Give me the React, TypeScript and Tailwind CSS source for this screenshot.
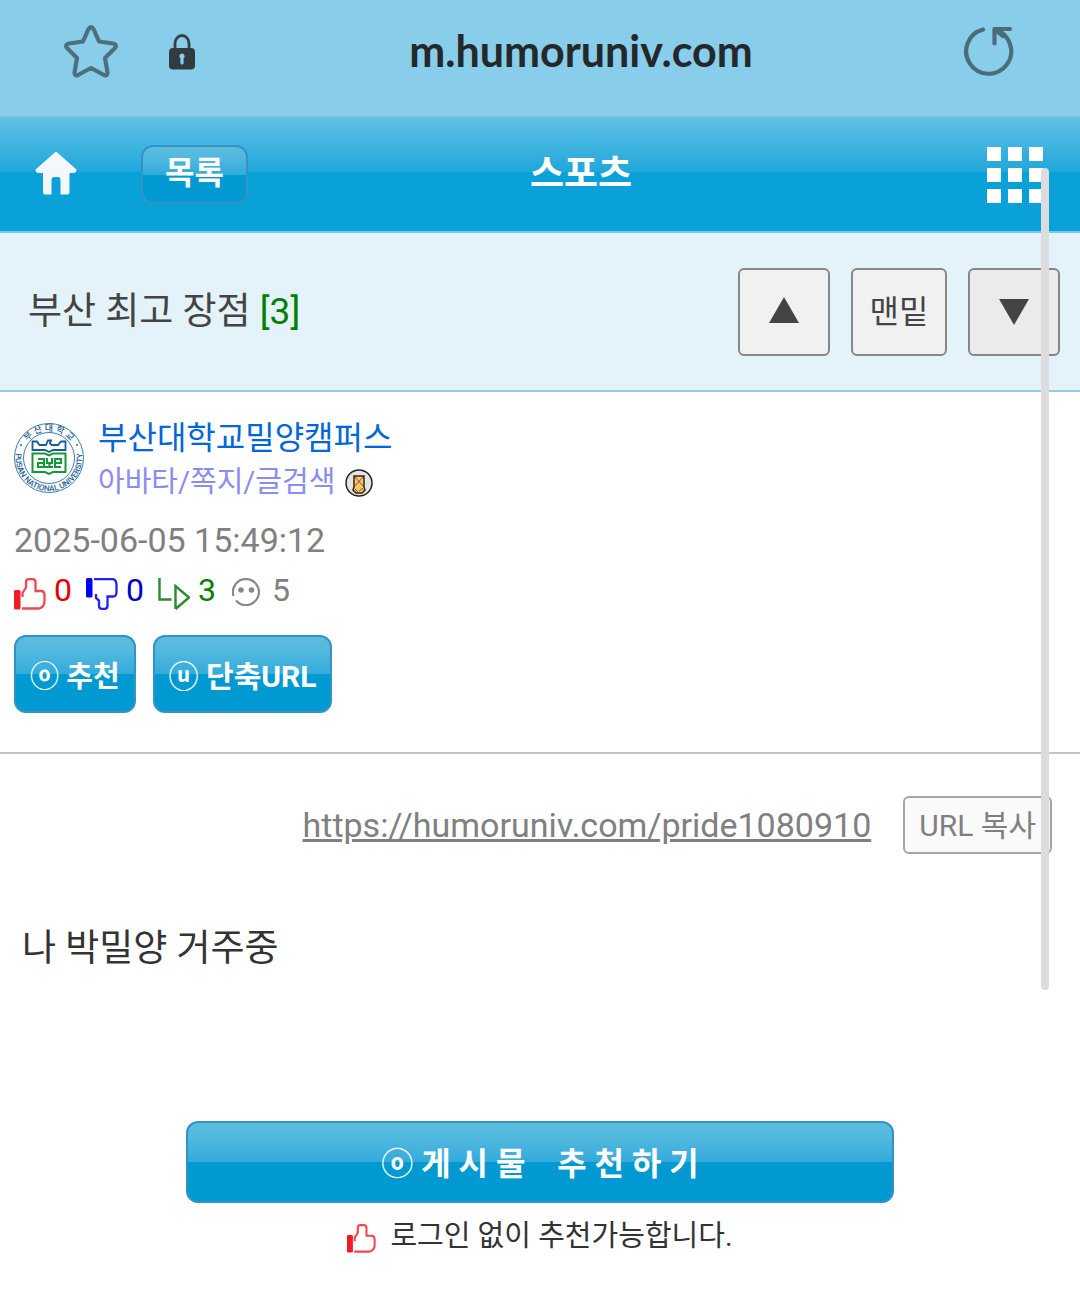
import type { ReactNode } from "react";

const glossy =
  "bg-[linear-gradient(to_bottom,#5bbce0_0%,#53b9df_18%,#33abdb_50%,#0099d1_50%,#0099d1_100%)] border-2 border-[#3293c5] font-bold text-white";

const StarIcon = () => (
  <svg viewBox="0 0 56 56" className="h-14 w-14" fill="none" stroke="#4f6f7c" strokeWidth="4.200" strokeLinejoin="round">
    <path d="M25.500 5Q28 1 30.500 5L36 17.500L50 19.500Q54.500 20.500 52 24L42 34L44.500 48.500Q44.500 52.500 41 51L28 44L15 51Q11.500 52.500 11.500 48.500L14 34L4 24Q1.500 20.500 6 19.500L20 17.500Z" />
  </svg>
);

const LockIcon = () => (
  <svg viewBox="0 0 26 36" className="h-9 w-[26px]">
    <path d="M6 16V9.500a7 8 0 0 1 14 0V16" fill="none" stroke="#364145" strokeWidth="2.800" />
    <rect y="14" width="26" height="21.500" rx="4" fill="#303c40" />
    <path d="M13 19.500a2.800 2.800 0 0 1 1.600 5V29a1.600 1.600 0 0 1-3.200 0v-4.500a2.800 2.800 0 0 1 1.600-5z" fill="#88cdea" />
  </svg>
);

const ReloadIcon = () => (
  <svg viewBox="0 0 52 52" className="h-[52px] w-[52px]" fill="none" stroke="#4b6d79" strokeWidth="4.200" strokeLinecap="round" strokeLinejoin="round">
    <path d="M20 5.500A22.500 22.500 0 1 0 33 6" />
    <path d="M47 5H31.500v14.500" />
    <path d="M32 5.500L40 12" />
  </svg>
);

const HomeIcon = () => (
  <svg viewBox="0 0 42 44" className="h-11 w-[42px]" fill="#f5f8fb">
    <path d="M21 0.500L41.500 18.500Q41.500 22 38 22H34.500V41.500Q34.500 43.500 32.500 43.500H25.500V29Q25.500 26 23 26H19.500Q16.500 26 16.500 29V43.500H10Q8 43.500 8 41.500V22H4Q0.500 22 0.500 18.500Z" />
  </svg>
);

const GridIcon = () => (
  <svg viewBox="0 0 56 56" className="h-14 w-14" fill="#fff">
    {[0, 21, 42].map((y) =>
      [0, 21, 42].map((x) => <rect key={`${x}-${y}`} x={x} y={y} width="14" height="14" />)
    )}
  </svg>
);

const ThumbUp = ({ className }: { className: string }) => (
  <svg viewBox="0 0 32 32" className={className} fill="none" stroke="#f0484d" strokeWidth="2.300">
    <rect x="0" y="12" width="6.500" height="19.500" rx="1.500" fill="#ee1c24" stroke="none" />
    <path d="M8 30.500H25Q30.500 29 30.500 23V17Q30.500 13 27 13H21.500V4Q21.500 1.200 18.500 1.200H14.500Q12 1.200 12 4V9.500L8.500 15V19" />
  </svg>
);

const ThumbDown = () => (
  <svg viewBox="0 0 32 32" className="h-8 w-8" fill="none" stroke="#2222ee" strokeWidth="2.300">
    <rect x="0" y="0" width="6.500" height="19.500" rx="1.500" fill="#0000f0" stroke="none" />
    <path d="M8 1.200H27Q30.500 2 30.500 7V14Q30.500 18.500 27 18.500H21.500V28Q21.500 30.800 18.500 30.800H16Q13 30.800 13 28V22.500L10 20V16" />
  </svg>
);

const ReplyIcon = () => (
  <svg viewBox="0 0 32 32" className="h-8 w-8" fill="none" stroke="#2a8a2e" strokeWidth="2.400">
    <path d="M1.500 0V21.500H13.500" />
    <path d="M17.500 31V8L31 19.500L17.500 31" />
  </svg>
);

const FaceIcon = () => (
  <svg viewBox="0 0 28 28" className="h-7 w-7" fill="none" stroke="#888" strokeWidth="2.200">
    <path d="M1.500 18A13 13 0 1 1 4 22.500" />
    <circle cx="9" cy="12" r="2.800" fill="#888" stroke="none" />
    <circle cx="19.500" cy="12" r="2.800" fill="#888" stroke="none" />
  </svg>
);

const Avatar = () => (
  <svg viewBox="0 0 70 72" className="h-[72px] w-[70px] shrink-0" role="img" aria-label="부산대학교">
    <circle cx="35" cy="36" r="34.500" fill="#fff" stroke="#3d7fa8" />
    <circle cx="35" cy="36" r="25.500" fill="none" stroke="#3d7fa8" />
    <path id="seal-top" d="M9 28A27.200 27.200 0 0 1 61 28" fill="none" />
    <path id="seal-bottom" d="M2.500 28A33.400 33.400 0 1 0 67.500 28" fill="none" />
    <text fontSize="9" fontWeight="500" fill="#1e5f96" className="font-['Noto_Sans_CJK_KR',sans-serif]">
      <textPath href="#seal-top" startOffset="50%" textAnchor="middle">부 산 대 학 교</textPath>
    </text>
    <text fontSize="8" fontWeight="500" fill="#1e5f96" className="font-['Roboto',sans-serif]">
      <textPath href="#seal-bottom" startOffset="50%" textAnchor="middle">PUSAN NATIONAL UNIVERSITY</textPath>
    </text>
    <circle cx="7" cy="23" r="0.900" fill="#1e5f96" />
    <circle cx="63" cy="23" r="0.900" fill="#1e5f96" />
    <path d="M18.500 28V19.500H23L25.500 23H32L34 18.500H37L36 21.500L38 23H44L47 19.500H51.500V28H39L35 30L31 28Z" fill="#fff" stroke="#145ba0" strokeWidth="1.800" />
    <path d="M18.500 31.500H31L35 33.500L39 31.500H51.500V50H39L35 52L31 50H18.500Z" fill="none" stroke="#15983c" strokeWidth="2" />
    <path d="M24 37h6v8h-6v-4h6M33 36v5h5v-5M35.500 41v5M31 45h8M47 45h-6v-8h6v4h-6" fill="none" stroke="#15983c" strokeWidth="2.100" />
  </svg>
);

const BadgeIcon = () => (
  <svg viewBox="0 0 28 28" className="h-7 w-7">
    <circle cx="14" cy="14" r="13" fill="#e4e4e4" stroke="#222" strokeWidth="1.500" />
    <path d="M9 7H19V18L20 21L17 24H11L8 21L9 18Z" fill="#fbc470" stroke="#332612" strokeWidth="1.500" />
    <path d="M10 8L18 17M18 8L10 17M10 20L13 23M18 19L14 22" fill="none" stroke="#85571b" />
  </svg>
);

const NavButton = ({ label, className, children }: { label: string; className: string; children: ReactNode }) => (
  <button
    type="button"
    aria-label={label}
    className={`flex h-[88px] items-center justify-center rounded-md border-2 border-[#858789] text-[32px] text-[#444] ${className}`}
  >
    {children}
  </button>
);

export default function App() {
  return (
    <div className="relative min-h-screen bg-white font-['Roboto','Noto_Sans_CJK_KR',sans-serif]">
      <div className="flex h-[118px] items-start border-b-2 border-[#7fbfdb] bg-[#88cdea] pr-[65px] pl-[63px] pt-6">
        <button type="button" aria-label="즐겨찾기">
          <StarIcon />
        </button>
        <span className="mt-[10px] ml-[50px]">
          <LockIcon />
        </span>
        <p className="flex-1 pl-1 text-center font-['Lato',sans-serif] text-[43px] leading-[54px] font-bold text-[#24282a]">
          m.humoruniv.com
        </p>
        <button type="button" aria-label="새로고침">
          <ReloadIcon />
        </button>
      </div>

      <header className="grid h-[115px] grid-cols-[1fr_auto_1fr] items-center border-b-2 border-[#74c8e8] bg-[linear-gradient(to_bottom,#60c1e5_0%,#1fa7da_48%,#0aa0d8_48%,#0aa0d8_100%)] pr-[37px] pl-[35px]">
        <div className="flex items-center gap-16">
          <a href="#home" aria-label="홈" className="pb-1">
            <HomeIcon />
          </a>
          <button type="button" className={`${glossy} h-[59px] w-[107px] rounded-xl pb-1 text-[32px] leading-10`}>
            목록
          </button>
        </div>
        <h1 className="pl-[84px] text-[37px] font-bold text-white">
          <a href="#sports">스포츠</a>
        </h1>
        <button type="button" aria-label="메뉴" className="justify-self-end">
          <GridIcon />
        </button>
      </header>

      <section className="flex h-[159px] items-center justify-between border-b-2 border-[#92cce8] bg-[#e4f3f9] pr-5 pl-7">
        <h2 className="text-[37px] text-[#444]">
          부산 최고 장점 <span className="text-[#008000]">[3]</span>
        </h2>
        <div className="flex gap-[21px]">
          <NavButton label="위로" className="w-[92px] bg-[#f1f1f1]">
            <svg viewBox="0 0 30 26" className="mb-1 h-[26px] w-[30px]" fill="#444">
              <path d="M15 0L30 26H0Z" />
            </svg>
          </NavButton>
          <NavButton label="맨밑" className="w-24 bg-[#f1f1f1]">
            맨밑
          </NavButton>
          <NavButton label="아래로" className="w-[92px] bg-[#ebebeb]">
            <svg viewBox="0 0 30 26" className="h-[26px] w-[30px]" fill="#444">
              <path d="M0 0H30L15 26Z" />
            </svg>
          </NavButton>
        </div>
      </section>

      <section className="border-b-2 border-[#c4c4c4] px-[14px] pt-6 pb-[39px]">
        <div className="flex items-center gap-[14px]">
          <div className="pb-1">
            <Avatar />
          </div>
          <div className="leading-11">
            <a href="#author" className="block text-[32px] text-[#0066dd]">
              부산대학교밀양캠퍼스
            </a>
            <div className="flex items-center gap-[10px] text-[29px] text-[#8c8cf0]">
              <a href="#profile">아바타/쪽지/글검색</a>
              <span className="pt-[2px]">
                <BadgeIcon />
              </span>
            </div>
          </div>
        </div>
        <p className="mt-[7px] text-[34px] leading-[58px] text-[#808080]">2025-06-05 15:49:12</p>
        <div className="mt-px flex items-center text-[32px] leading-10">
          <ThumbUp className="mt-2 h-8 w-8" />
          <span className="ml-2 text-[#e60000]">0</span>
          <span className="mt-2 ml-[14px]">
            <ThumbDown />
          </span>
          <span className="ml-2 text-[#0000d0]">0</span>
          <span className="mt-2 ml-[14px]">
            <ReplyIcon />
          </span>
          <span className="ml-2 text-[#008000]">3</span>
          <span className="mt-1 ml-4">
            <FaceIcon />
          </span>
          <span className="ml-3 text-[#808080]">5</span>
        </div>
        <div className="mt-[25px] flex gap-[17px]">
          <button type="button" className={`${glossy} h-[78px] rounded-xl px-[14px] pt-2 text-[29px]`}>
            ⓞ 추천
          </button>
          <button type="button" className={`${glossy} h-[78px] rounded-xl px-[14px] pt-1 text-[30px]`}>
            ⓤ 단축URL
          </button>
        </div>
      </section>

      <main className="px-[22px] text-[#333]">
        <div className="mt-[42px] mr-[6px] flex items-center justify-end gap-8 text-[#808080]">
          <a href="https://humoruniv.com/pride1080910" className="text-[34px] underline">
            https://humoruniv.com/pride1080910
          </a>
          <button type="button" className="h-[58px] rounded-md border-2 border-[#a5a5a9] bg-[#fafafa] px-[14px] text-[30px]">
            URL 복사
          </button>
        </div>
        <p className="mt-[67px] text-[37px] leading-14">나 박밀양 거주중</p>
        <button
          type="button"
          className={`${glossy} mx-auto mt-36 block h-[82px] w-[708px] max-w-full rounded-xl pt-1 text-[32px] whitespace-pre`}
        >
          {"ⓞ 게 시 물    추 천 하 기"}
        </button>
        <p className="mt-[9px] flex items-center justify-center gap-[14px] text-[29px] leading-12">
          <ThumbUp className="mt-1 h-[29px] w-[29px]" />
          로그인 없이 추천가능합니다.
        </p>
      </main>

      {/* overlay scrollbar thumb */}
      <div className="absolute top-[168px] right-[31px] h-[822px] w-2 rounded-full bg-[#dcdcde]" />
    </div>
  );
}
